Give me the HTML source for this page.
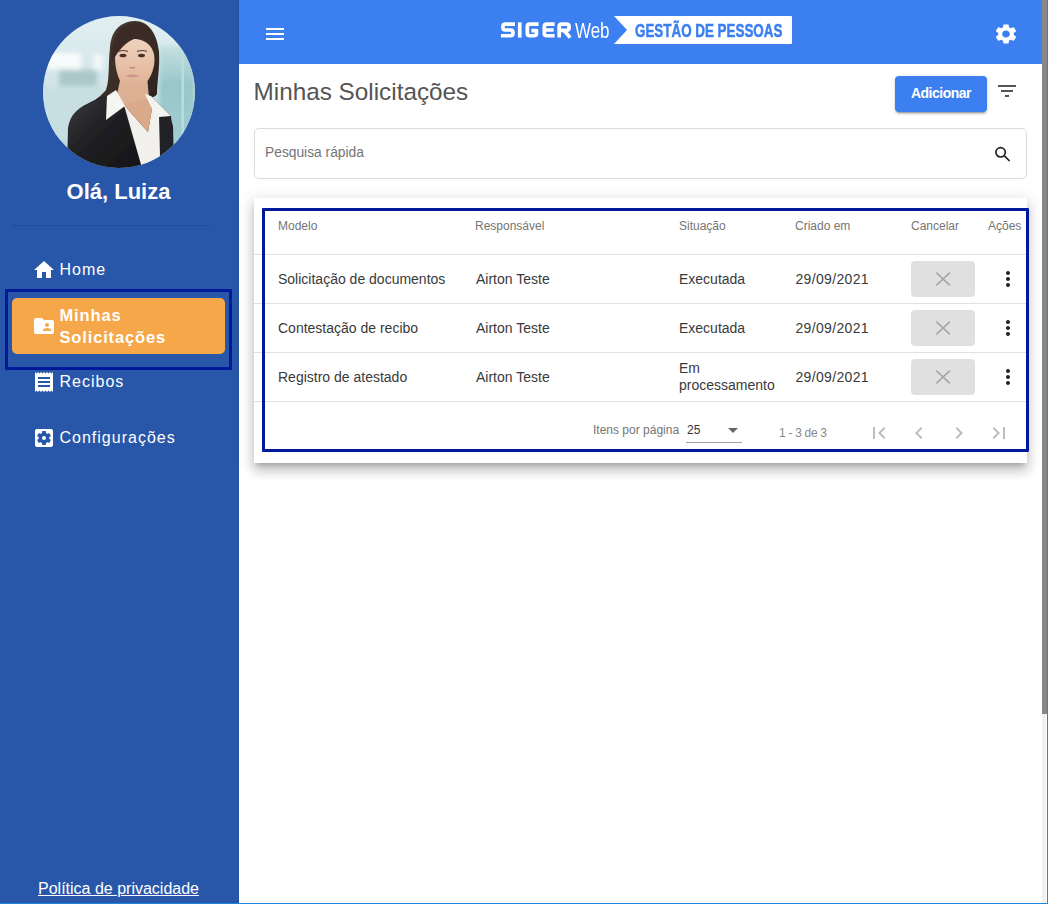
<!DOCTYPE html>
<html><head><meta charset="utf-8">
<style>
*{margin:0;padding:0;box-sizing:border-box}
html,body{width:1048px;height:904px;overflow:hidden;background:#fff;font-family:"Liberation Sans",sans-serif}
.a{position:absolute}
.t{position:absolute;white-space:nowrap;line-height:20px}
#side{position:absolute;left:0;top:0;width:239px;height:904px;background:#2856a8}
#head{position:absolute;left:239px;top:0;width:803px;height:64px;background:#3b7ff0}
svg{position:absolute;display:block}
.nav{position:absolute;left:59.5px;font-size:16px;color:#fff;letter-spacing:1px;white-space:nowrap;line-height:22px}
.ch{position:absolute;font-size:12px;color:#757575;white-space:nowrap;line-height:14px;top:219px}
.cell{position:absolute;font-size:14px;color:#3a3a3a;white-space:nowrap;line-height:16px}
.cbtn{position:absolute;left:911px;width:64px;height:36px;background:#e0e0e0;border-radius:4px}
.div{position:absolute;left:254px;width:773px;height:1px;background:#e0e0e0}
</style></head><body>
<!-- SIDEBAR -->
<div id="side">
  <div class="a" style="left:238px;top:0;width:1px;height:904px;background:#24509c"></div>
  <svg style="left:43px;top:16px" width="152" height="152" viewBox="0 0 152 152">
    <defs>
      <clipPath id="cc"><circle cx="76" cy="76" r="76"/></clipPath>
      <linearGradient id="bg" x1="0" y1="0" x2="0" y2="1">
        <stop offset="0" stop-color="#e2eff1"/><stop offset="0.5" stop-color="#cfe3e6"/><stop offset="1" stop-color="#b7d6da"/>
      </linearGradient>
      <linearGradient id="glass" x1="0" y1="0" x2="0" y2="1">
        <stop offset="0" stop-color="#c5e0e2"/><stop offset="0.35" stop-color="#98c6c9"/><stop offset="1" stop-color="#a5cfd1"/>
      </linearGradient>
      <linearGradient id="skin" x1="0" y1="0" x2="0" y2="1">
        <stop offset="0" stop-color="#efd3bf"/><stop offset="0.6" stop-color="#e6bea4"/><stop offset="1" stop-color="#dcae92"/>
      </linearGradient>
      <linearGradient id="hair" x1="0" y1="0" x2="1" y2="1">
        <stop offset="0" stop-color="#4d3d35"/><stop offset="1" stop-color="#2b211d"/>
      </linearGradient>
      <linearGradient id="jk" x1="0" y1="0" x2="1" y2="1">
        <stop offset="0" stop-color="#3a3a3d"/><stop offset="0.5" stop-color="#1e1e21"/><stop offset="1" stop-color="#151517"/>
      </linearGradient>
      <filter id="bl" x="-5%" y="-5%" width="110%" height="110%"><feGaussianBlur stdDeviation="0.7"/></filter>
      <filter id="bl2"><feGaussianBlur stdDeviation="2.5"/></filter>
    </defs>
    <g clip-path="url(#cc)">
      <rect width="152" height="152" fill="url(#bg)"/>
      <g filter="url(#bl2)">
        <rect x="4" y="37" width="34" height="16" fill="#f8fcfc"/>
        <rect x="50" y="38" width="10" height="16" fill="#f2f8f8"/>
        <rect x="16" y="54" width="38" height="16" fill="#abc7ca"/>
        <rect x="0" y="72" width="60" height="50" fill="#c8dfe2"/>
        <rect x="116" y="30" width="36" height="112" fill="url(#glass)"/>
      </g>
      <rect x="138.5" y="38" width="2.5" height="104" fill="#b9e0dc" opacity="0.9"/>
      <g filter="url(#bl)">
      <!-- hair back -->
      <path d="M91 5 C76 6 68 16 67 32 C65 48 67 62 63 74 C58 80 54 82 50 86 C60 84 70 82 74 80 L106 80 C110 82 112 81 114 78 C114 66 117 52 116 36 C114 16 104 4 91 5 Z" fill="url(#hair)"/>
      <!-- torso base to avoid gaps -->
      <path d="M26 152 L27 110 C30 96 40 88 62 80 L104 76 L128 100 L132 152 Z" fill="#222"/>
      <!-- neck -->
      <path d="M78 60 L104 60 L106 82 L100 100 L82 92 L74 78 Z" fill="#dcb093"/>
      <!-- face -->
      <path d="M72 40 C72 30 82 22 93 23 C104 24 111.5 32 111.5 43 C111.5 55 106 65 99 71 C95 74 86 74 82 71 C76 66 72 55 72 40 Z" fill="url(#skin)"/>
      <!-- bangs -->
      <path d="M69 46 C67 22 78 7 92 7 C106 7 115 18 113 44 C111 32 108 25 102 22.5 C90 20 80 28 72 41 Z" fill="#3a2b25"/>
      <ellipse cx="80" cy="39.5" rx="3.5" ry="1.8" fill="#46302a"/>
      <ellipse cx="98.5" cy="39.5" rx="3.5" ry="1.8" fill="#46302a"/>
      <path d="M75.5 35.5 Q80 33.5 85 35.5" stroke="#5a4034" stroke-width="1.1" fill="none"/>
      <path d="M94 35.5 Q99 33.5 104 35.5" stroke="#5a4034" stroke-width="1.1" fill="none"/>
      <path d="M86.5 51 Q89 53.5 92 51" stroke="#c08a70" stroke-width="1.4" fill="none"/>
      <path d="M82.5 59.5 Q89.5 57.5 96.5 59.5 Q89.5 63.5 82.5 59.5 Z" fill="#cf948a"/>
      <!-- left jacket -->
      <path d="M24 152 L25 112 C27 98 36 90 52 85 L64 80 L80 92 L100 152 Z" fill="url(#jk)"/>
      <!-- right jacket -->
      <path d="M113 97 L127 100 L130 110 L131 152 L111 152 Z" fill="#232327"/>
      <!-- shirt body -->
      <path d="M81 89 L105 116 L109 92 L116 99 L117 140 L112 152 L99 152 Z" fill="#f1f0ec"/>
      <!-- chest V skin -->
      <path d="M81 89 L106 82 L109 93 L105 116 Z" fill="#d9a98a"/>
      <!-- left collar -->
      <path d="M64 80 L73 74 L82 90 L63 104 Z" fill="#f5f5f2"/>
      <!-- right collar -->
      <path d="M102 78 L108 80 L128 100 L116 101 L109 93 Z" fill="#f3f3f0"/>
      </g>
    </g>
  </svg>
  <div class="t" style="left:0;width:239px;text-align:center;top:180px;margin-left:-1px;font-size:22px;letter-spacing:0;font-weight:bold;color:#fff;line-height:24px">Olá, Luiza</div>
  <div class="a" style="left:12px;top:225px;width:198px;height:1px;background:#234c98"></div>

  <!-- nav: Home -->
  <svg style="left:32px;top:258px" width="24" height="24" viewBox="0 0 24 24"><path d="M10 20v-6h4v6h5v-8h3L12 3 2 12h3v8z" fill="#fff"/></svg>
  <div class="nav" style="top:259px">Home</div>

  <!-- orange selected -->
  <div class="a" style="left:12px;top:298px;width:213px;height:56px;background:#f5a74a;border-radius:5px"></div>
  <svg style="left:32px;top:314px" width="24" height="24" viewBox="0 0 24 24"><path d="M20 6h-8l-2-2H4c-1.1 0-1.99.9-1.99 2L2 18c0 1.1.9 2 2 2h16c1.1 0 2-.9 2-2V8c0-1.1-.9-2-2-2zm-5 3c1.1 0 2 .9 2 2s-.9 2-2 2-2-.9-2-2 .9-2 2-2zm4 8h-8v-1c0-1.33 2.67-2 4-2s4 .67 4 2v1z" fill="#fff"/></svg>
  <div class="nav" style="top:304px;left:59.5px;font-size:16.5px;font-weight:bold;letter-spacing:0.85px;line-height:22px">Minhas<br>Solicitações</div>
  <div class="a" style="left:5px;top:289px;width:227px;height:81px;border:3px solid #00189a;border-radius:1px"></div>

  <!-- Recibos -->
  <svg style="left:32px;top:370px" width="24" height="24" viewBox="0 0 24 24"><path d="M18 17H6v-2h12v2zm0-4H6v-2h12v2zm0-4H6V7h12v2zM3 22l1.5-1.5L6 22l1.5-1.5L9 22l1.5-1.5L12 22l1.5-1.5L15 22l1.5-1.5L18 22l1.5-1.5L21 22V2l-1.5 1.5L18 2l-1.5 1.5L15 2l-1.5 1.5L12 2l-1.5 1.5L9 2 7.5 3.5 6 2 4.5 3.5 3 2v20z" fill="#fff"/></svg>
  <div class="nav" style="top:371px">Recibos</div>

  <!-- Config -->
  <svg style="left:32px;top:426px" width="24" height="24" viewBox="0 0 24 24"><path d="M12 10c-1.1 0-2 .9-2 2s.9 2 2 2 2-.9 2-2-.9-2-2-2zm7-7H5c-1.11 0-2 .9-2 2v14c0 1.1.89 2 2 2h14c1.1 0 2-.9 2-2V5c0-1.1-.9-2-2-2zm-1.75 9c0 .23-.02.46-.05.68l1.48 1.160c.13.11.17.3.08.45l-1.4 2.42c-.09.15-.27.21-.43.15l-1.74-.7c-.36.28-.76.51-1.18.69l-.26 1.85c-.03.17-.18.3-.35.3h-2.8c-.17 0-.32-.13-.35-.29l-.26-1.85c-.43-.18-.82-.41-1.18-.69l-1.74.7c-.16.06-.34 0-.43-.15l-1.4-2.42c-.09-.15-.05-.34.08-.45l1.48-1.16c-.03-.23-.05-.46-.05-.69 0-.23.02-.46.05-.68l-1.48-1.16c-.13-.11-.17-.3-.08-.45l1.4-2.42c.09-.15.27-.21.43-.15l1.74.7c.36-.28.76-.51 1.18-.69l.26-1.85c.03-.17.18-.3.35-.3h2.8c.17 0 .32.13.35.29l.26 1.85c.43.18.82.41 1.18.69l1.74-.7c.16-.06.34 0 .43.15l1.4 2.42c.09.15.05.34-.08.45l-1.48 1.16c.03.23.05.46.05.69z" fill="#fff"/></svg>
  <div class="nav" style="top:427px">Configurações</div>

  <div class="t" style="left:-1px;width:239px;text-align:center;top:879px;font-size:16px;color:#fff;text-decoration:underline;line-height:20px">Política de privacidade</div>
</div>

<!-- HEADER -->
<div id="head">
</div>
<svg style="left:263px;top:22px" width="24" height="24" viewBox="0 0 24 24"><path d="M3 18h18v-2H3v2zm0-5h18v-2H3v2zm0-7v2h18V6H3z" fill="#fff"/></svg>
<svg style="left:993px;top:22px" width="26" height="24" viewBox="0 0 24 24" preserveAspectRatio="none"><path d="M19.14 12.94c.04-.3.06-.61.06-.94 0-.32-.02-.64-.07-.94l2.03-1.58c.18-.14.23-.41.12-.61l-1.92-3.32c-.12-.22-.37-.29-.59-.22l-2.39.96c-.5-.38-1.03-.7-1.62-.94l-.36-2.54c-.04-.24-.24-.41-.48-.41h-3.84c-.24 0-.43.17-.47.41l-.36 2.54c-.59.24-1.13.57-1.62.94l-2.39-.96c-.22-.08-.47 0-.59.22L2.74 8.87c-.12.21-.08.47.12.61l2.03 1.58c-.05.3-.09.63-.09.94s.02.64.07.94l-2.03 1.58c-.18.14-.23.41-.12.61l1.92 3.32c.12.22.37.29.59.22l2.39-.96c.5.38 1.03.7 1.62.94l.36 2.54c.05.24.24.41.48.41h3.84c.24 0 .44-.17.47-.41l.36-2.54c.59-.24 1.13-.56 1.62-.94l2.39.96c.22.08.47 0 .59-.22l1.92-3.32c.12-.22.07-.47-.12-.61l-2.01-1.58zM12 15.6c-1.98 0-3.6-1.62-3.6-3.6s1.62-3.6 3.6-3.6 3.6 1.62 3.6 3.6-1.62 3.6-3.6 3.6z" fill="#fff"/></svg>

<!-- logo -->
<svg style="left:498px;top:18px" width="76" height="24" viewBox="0 0 76 24"><g fill="none" stroke="#fff" stroke-width="3.7" stroke-linejoin="round">
<path d="M17 6.2 H7.4 Q4.9 6.2 4.9 8.7 V9.6 Q4.9 12 7.4 12 H12.5 Q15 12 15 14.4 V15.3 Q15 17.75 12.5 17.75 H2.9"/>
<path d="M21.75 4.35 V19.6"/>
<path d="M40.6 6.2 H31.8 Q29.3 6.2 29.3 8.7 V15.3 Q29.3 17.75 31.8 17.75 H36 Q38.5 17.75 38.5 15.3 V12.7 H33.4"/>
<path d="M56.6 6.2 H48.8 Q46.3 6.2 46.3 8.7 V15.3 Q46.3 17.75 48.8 17.75 H56.6 M46.3 12 H55.6"/>
<path d="M61.2 19.6 V8.7 Q61.2 6.2 63.7 6.2 H68.6 Q71.1 6.2 71.1 8.7 V9.8 Q71.1 12.3 68.6 12.3 H61.2"/>
<path d="M65.8 12.3 L72.2 19.6"/>
</g></svg>
<div class="t" style="left:575px;top:19px;font-size:22px;color:#fff;line-height:24px;transform-origin:0 0;transform:scaleX(0.77)">Web</div>
<svg style="left:613.5px;top:16px" width="179" height="28" viewBox="0 0 179 28"><path d="M0 0 H177 Q178 0 178 1 V27 Q178 28 177 28 H0 L13 14 Z" fill="#fff"/></svg>
<div class="t" style="left:634.5px;top:19.5px;font-size:19px;font-weight:bold;color:#3b7ff0;-webkit-text-stroke:0.5px #3b7ff0;line-height:22px;transform-origin:0 0;transform:scaleX(0.705)">GESTÃO DE PESSOAS</div>

<!-- scrollbar + frame -->
<div class="a" style="left:1042px;top:0;width:5px;height:714px;background:#888"></div>
<div class="a" style="left:1042px;top:714px;width:4px;height:189px;background:#f0f0f0"></div>
<div class="a" style="left:1047px;top:0;width:1px;height:904px;background:#1e86dc"></div>
<div class="a" style="left:0;top:903px;width:1048px;height:1px;background:#1e86dc"></div>

<!-- MAIN -->
<div class="t" style="left:253.5px;top:79px;font-size:24.3px;color:#555;line-height:26px">Minhas Solicitações</div>
<div class="a" style="left:895px;top:76px;width:92px;height:36px;background:#3b7ff0;border-radius:4px;box-shadow:0 3px 1px -2px rgba(0,0,0,.2),0 2px 2px 0 rgba(0,0,0,.14),0 1px 5px 0 rgba(0,0,0,.12)"></div>
<div class="t" style="left:895px;width:92px;text-align:center;top:84.5px;font-size:14px;letter-spacing:-0.5px;font-weight:bold;color:#fff;line-height:16px">Adicionar</div>
<svg style="left:995px;top:79px" width="24" height="24" viewBox="0 0 24 24"><path d="M10 18h4v-2h-4v2zM3 6v2h18V6H3zm3 7h12v-2H6v2z" fill="#555"/></svg>

<div class="a" style="left:254px;top:128px;width:773px;height:51px;border:1px solid #dcdcdc;border-radius:5px"></div>
<div class="t" style="left:265px;top:145px;font-size:13.8px;color:#757575;line-height:16px">Pesquisa rápida</div>
<svg style="left:990px;top:140px" width="24" height="24" viewBox="0 0 24 24"><circle cx="10.6" cy="12.3" r="4.7" stroke="#1e1e1e" stroke-width="1.7" fill="none"/><path d="M14.4 15.8 L19.6 21" stroke="#1e1e1e" stroke-width="1.7" fill="none"/></svg>

<!-- card -->
<div class="a" style="left:254px;top:198px;width:773px;height:265px;background:#fff;box-shadow:0 5px 5px -3px rgba(0,0,0,.2),0 8px 10px 1px rgba(0,0,0,.14),0 3px 14px 2px rgba(0,0,0,.12)"></div>
<div class="ch" style="left:278px">Modelo</div>
<div class="ch" style="left:475px">Responsável</div>
<div class="ch" style="left:679px">Situação</div>
<div class="ch" style="left:795px">Criado em</div>
<div class="ch" style="left:911px">Cancelar</div>
<div class="ch" style="left:988px">Ações</div>
<div class="div" style="top:254px"></div>
<div class="div" style="top:303px"></div>
<div class="div" style="top:352px"></div>
<div class="div" style="top:401px"></div>

<div class="cell" style="left:278px;top:271px">Solicitação de documentos</div>
<div class="cell" style="left:476px;top:271px">Airton Teste</div>
<div class="cell" style="left:679px;top:271px">Executada</div>
<div class="cell" style="left:795.5px;letter-spacing:.33px;top:271px">29/09/2021</div>
<div class="cbtn" style="top:261px"></div>

<div class="cell" style="left:278px;top:320px">Contestação de recibo</div>
<div class="cell" style="left:476px;top:320px">Airton Teste</div>
<div class="cell" style="left:679px;top:320px">Executada</div>
<div class="cell" style="left:795.5px;letter-spacing:.33px;top:320px">29/09/2021</div>
<div class="cbtn" style="top:310px"></div>

<div class="cell" style="left:278px;top:369px">Registro de atestado</div>
<div class="cell" style="left:476px;top:369px">Airton Teste</div>
<div class="cell" style="left:679px;top:360px;line-height:17px">Em<br>processamento</div>
<div class="cell" style="left:795.5px;letter-spacing:.33px;top:369px">29/09/2021</div>
<div class="cbtn" style="top:359px"></div>

<!-- cancel X and more_vert -->
<svg style="left:930.5px;top:267px" width="24" height="24" viewBox="0 0 24 24"><path d="M5.3 5.6L18.9 18.4M18.9 5.6L5.3 18.4" stroke="#a6a6a6" stroke-width="1.5"/></svg>
<svg style="left:930.5px;top:316px" width="24" height="24" viewBox="0 0 24 24"><path d="M5.3 5.6L18.9 18.4M18.9 5.6L5.3 18.4" stroke="#a6a6a6" stroke-width="1.5"/></svg>
<svg style="left:930.5px;top:365px" width="24" height="24" viewBox="0 0 24 24"><path d="M5.3 5.6L18.9 18.4M18.9 5.6L5.3 18.4" stroke="#a6a6a6" stroke-width="1.5"/></svg>
<svg style="left:996px;top:267px" width="24" height="24" viewBox="0 0 24 24"><path d="M12 8c1.1 0 2-.9 2-2s-.9-2-2-2-2 .9-2 2 .9 2 2 2zm0 2c-1.1 0-2 .9-2 2s.9 2 2 2 2-.9 2-2-.9-2-2-2zm0 6c-1.1 0-2 .9-2 2s.9 2 2 2 2-.9 2-2-.9-2-2-2z" fill="#222"/></svg>
<svg style="left:996px;top:316px" width="24" height="24" viewBox="0 0 24 24"><path d="M12 8c1.1 0 2-.9 2-2s-.9-2-2-2-2 .9-2 2 .9 2 2 2zm0 2c-1.1 0-2 .9-2 2s.9 2 2 2 2-.9 2-2-.9-2-2-2zm0 6c-1.1 0-2 .9-2 2s.9 2 2 2 2-.9 2-2-.9-2-2-2z" fill="#222"/></svg>
<svg style="left:996px;top:365px" width="24" height="24" viewBox="0 0 24 24"><path d="M12 8c1.1 0 2-.9 2-2s-.9-2-2-2-2 .9-2 2 .9 2 2 2zm0 2c-1.1 0-2 .9-2 2s.9 2 2 2 2-.9 2-2-.9-2-2-2zm0 6c-1.1 0-2 .9-2 2s.9 2 2 2 2-.9 2-2-.9-2-2-2z" fill="#222"/></svg>

<!-- paginator -->
<div class="t" style="left:593px;top:423px;font-size:12px;color:#757575;line-height:14px">Itens por página</div>
<div class="t" style="left:687px;top:423px;font-size:12px;color:#333;line-height:14px">25</div>
<svg style="left:728px;top:428px" width="10" height="5" viewBox="0 0 10 5"><path d="M0 0L10 0L5 5Z" fill="#666"/></svg>
<div class="a" style="left:686px;top:442px;width:56px;height:1px;background:#9e9e9e"></div>
<div class="t" style="left:779px;top:426px;font-size:12px;letter-spacing:-0.3px;color:#888;line-height:14px">1 - 3 de 3</div>
<svg style="left:867px;top:421px" width="24" height="24" viewBox="0 0 24 24"><path d="M18.41 16.59L13.82 12l4.59-4.59L17 6l-6 6 6 6zM6 6h2v12H6z" fill="#bdbdbd"/></svg>
<svg style="left:907px;top:421px" width="24" height="24" viewBox="0 0 24 24"><path d="M15.41 7.41L14 6l-6 6 6 6 1.41-1.41L10.83 12z" fill="#bdbdbd"/></svg>
<svg style="left:947px;top:421px" width="24" height="24" viewBox="0 0 24 24"><path d="M10 6L8.59 7.41 13.17 12l-4.58 4.59L10 18l6-6z" fill="#bdbdbd"/></svg>
<svg style="left:987px;top:421px" width="24" height="24" viewBox="0 0 24 24"><path d="M5.59 7.41L10.18 12l-4.59 4.59L7 18l6-6-6-6zM16 6h2v12h-2z" fill="#bdbdbd"/></svg>

<!-- highlight box -->
<div class="a" style="left:262px;top:208px;width:767px;height:244px;border:3px solid #00189a;border-radius:1px"></div>
</body></html>
